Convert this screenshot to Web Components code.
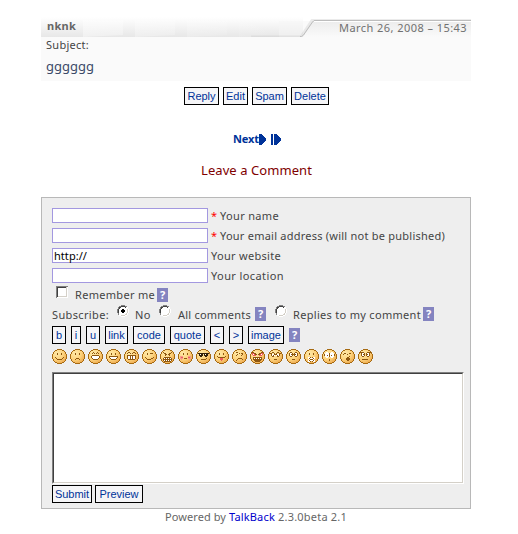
<!DOCTYPE html>
<html lang="en">
<head>
<meta charset="utf-8">
<title>Leave a Comment</title>
<style>
body{margin:0;background:#fff;font:11px/16px "Noto Sans","Open Sans",sans-serif;color:#444}
</style>
</head>
<body>
<tb-page></tb-page>
<script>
const define=(name,html,setup)=>{
  const t=document.createElement('template');t.innerHTML=html;
  customElements.define(name,class extends HTMLElement{
    constructor(){super();this.attachShadow({mode:'open'}).append(t.content.cloneNode(true));}
    connectedCallback(){if(setup)setup(this,this.shadowRoot);}
  });
};

/* Text run whose tracking is adjusted to a set width */
define('tb-text','<style>:host{display:block;flex:none;white-space:pre}span{display:inline-block}</style><span><slot></slot></span>',(el,root)=>{
  const w=+el.getAttribute('w'),s=root.querySelector('span');
  el.style.width=w+'px';
  s.style.letterSpacing=((w-s.getBoundingClientRect().width)/el.textContent.length)+'px';
});
define('tb-button',`<style>:host{display:block;flex:none;height:18px}
button{box-sizing:border-box;display:flex;align-items:center;justify-content:center;width:100%;height:18px;margin:0;padding:0;border:1px solid #000;border-radius:0;background:#f5f5f7;color:#039;font:11px/16px "Liberation Sans",Arial,sans-serif;white-space:pre}</style><button><slot></slot></button>`,
(el)=>{el.style.width=el.getAttribute('w')+'px';});
define('tb-help',`<style>:host{display:block;flex:none;width:11px;height:14px;background:#8484c0;color:#fff;font:bold 11px/14px "Noto Sans",sans-serif;text-align:center}</style>?`);
define('tb-input',`<style>:host{display:block;flex:none;width:156px;height:15px}
div{box-sizing:border-box;height:15px;border:1px solid #a398e0;background:#fff;color:#000;padding-left:1px;font:11px/14px "Noto Sans",sans-serif}</style><div><slot></slot></div>`);
define('tb-row',`<style>:host{display:flex;align-items:flex-start}</style><slot></slot>`);
define('tb-check',`<style>:host{display:block;flex:none;width:12px;height:12px}svg{display:block}</style>
<svg width="12" height="12" shape-rendering="crispEdges"><path fill="#fff" d="M0 0h12v12H0z"/><path fill="#808080" d="M0 0h12v1H1v11H0z"/><path fill="#404040" d="M1 1h10v1H2v9H1z"/><path fill="#d4d0c8" d="M11 1v10H2v-1h8V1z"/></svg>`);
define('tb-radio',`<style>:host{display:block;flex:none;width:12px;height:12px}svg{display:block}.d{display:none}:host([checked]) .d{display:block}</style>
<svg width="12" height="12" shape-rendering="crispEdges"><path fill="#fff" d="M4 0h4v1h2v1h1v2h1v4h-1v2h-1v1H8v1H4v-1H2v-1H1V8H0V4h1V2h1V1h2z"/><path fill="#808080" d="M4 0h4v1h2v1H8V1H4v1H2v2H1v4h1v2H1V8H0V4h1V2h1V1h2z"/><path fill="#404040" d="M4 1h4v1h1v1H8V2H4v1H3v1H2v4H1V4h1V2h2z"/><path fill="#d4d0c8" d="M10 4h1v4h-1v2H8v1H4v-1h4V9h1V8h1z"/><path class="d" fill="#000" d="M5 4h2v1h1v2H7v1H5V7H4V5h1z"/></svg>`);

/* Feature maps: 11 columns x 10 rows inside a 15px face */
const faces={
smile:'...........|...b...b...|...b...b...|...........|...........|.b.......b.|..b.....b..|...bbbbb...',
sad:'...........|...b...b...|...b...b...|...........|...........|...........|....bbb....|...b...b...',
grin:'...b...b...|..b.b.b.b..|...........|..bbbbbbb..|.bwwwwwwwb.|.bwwwwwwwb.|..bwwwwwb..|...bbbbb...',
laugh:'...........|...b...b...|...b...b...|...........|.bbbbbbbbb.|.bwwwwwwwb.|..bwwwwwb..|...bbbbb...',
teeth:'..bb...bb..|.b..b.b..b.|...........|.bbbbbbbbb.|.bwwbwbwwb.|.bwwbwbwwb.|.bwwbwbwwb.|..bbbbbbb..',
wink:'...........|...b..bbb..|...b.......|...........|...........|.b.......b.|..b....bb..|...bbbb....',
angry:'.b.......b.|..bb...bb..|...bb.bb...|...b...b...|...........|..bbbbbbb..|.bwbwbwbwb.|.bbbbbbbbb.|.bwbwbwbwb.|..bbbbbbb..',
blush:'...........|...b...b...|...b...b...|...........|ppp.....ppp|prr.....rrp|ppp.bbb.ppp|.p.......p.',
cool:'...........|kkkkkkkkkkk|.kwkk.kwkk.|.kkkk.kkkk.|..kk...kk..|...........|........b..|...bbbbb...',
tongue:'...........|...b...b...|...b...b...|...........|.b.......b.|..bbbbbbb..|....rrr....|....rrr....|.....r.....',
confused:'..bb.......|.....b.bb..|...b....b..|..b....b...|...........|...........|....bbbb...|...b....b..|..b........',
evil:'bb.......bb|rrbb...bbrr|rwrbb.bbrwr|.rrr...rrr.|...........|.bbbbbbbbb.|.bwbwbwbwb.|.bbbbbbbbb.|..bbbbbbb..|...bbbbb...',
specs:'..bb...bb..|bb..b.b..bb|.bwwbbbwwb.|.bwbw.wbwb.|..bb...bb..|...........|...........|....bbb....',
roll:'..bb...bb..|.bwwb.bwwb.|.bwbbbbbwb.|.bwwb.bwwb.|..bb...bb..|...........|...........|....bbb....',
zip:'...........|...b...b...|...b...b...|...........|...........|..wwb.bww..|..wbwwwbw..|...wbbbw...|..wbwwwbw..|..wwb.bww..',
eek:'..ww...ww..|.wwwwbwwww.|bwwwwbwwwwb|bwwbwbwbwwb|.wwwwbwwww.|..ww...ww..|...........|.....b.....|.....b.....',
yawn:'...........|..bb...bb..|.b...b.....|...........|.......b...|.....bb....|....bbbb...|....bbbb...|.....bb....',
eyes:'bbbb...bbbb|.bwwb.bwwb.|.bwbb.bbwb.|.bwwb.bwwb.|..bb...bb..|...........|...........|..bbbbbb...'
};
define('tb-smiley',`<style>:host{display:block;flex:none;width:15px;height:15px}svg{display:block}</style>
<svg width="15" height="15" shape-rendering="crispEdges"><defs><radialGradient id="g" cx=".35" cy=".3" r=".75"><stop offset="0" stop-color="#ffeaa9"/><stop offset=".55" stop-color="#fdd27c"/><stop offset="1" stop-color="#eba447"/></radialGradient></defs>
<path fill="url(#g)" d="M5 0h5v1h2v1h1v1h1v2h1v5h-1v2h-1v1h-1v1h-2v1H5v-1H3v-1H2v-1H1v-2H0V5h1V3h1V2h1V1h2z"/>
<path fill="#a66a12" d="M5 0h5v1H5zM3 1h2v1H3zM10 1h2v1h-2zM2 2h1v1H2zM12 2h1v1h-1zM1 3h1v2H1zM13 3h1v2h-1zM0 5h1v5H0zM14 5h1v5h-1zM1 10h1v2H1zM13 10h1v2h-1zM2 12h1v1H2zM12 12h1v1h-1zM3 13h2v1H3zM10 13h2v1h-2zM5 14h5v1H5z"/></svg>`,
(el,root)=>{
  const c={b:'#8e5710',w:'#fff',k:'#33200a',r:'#ec5a60',p:'#f59a8c'},svg=root.querySelector('svg'),d={};
  faces[el.getAttribute('face')].split('|').forEach((r,y)=>[...r].forEach((ch,x)=>{if(c[ch])d[ch]=(d[ch]||'')+`M${x+2} ${y+3}h1v1h-1z`;}));
  for(const k in d){const p=document.createElementNS('http://www.w3.org/2000/svg','path');p.setAttribute('d',d[k]);p.setAttribute('fill',c[k]);svg.append(p);}
});

define('tb-post',`<style>
:host{display:block;width:430px;height:64px;background:#fafafa;margin-left:41px}
header{display:grid;height:20px}
header>*{grid-area:1/1}
.head{padding:1px 4px 0 6px;justify-content:space-between}
.name{color:#666;font-weight:bold}.date{color:#707070;margin-top:2px}
.body{display:flex;flex-direction:column;padding:0 5px}
.msg{font-size:13px;line-height:18px;margin-top:4px;color:#3c4a68}
svg{display:block}</style>
<header><svg width="430" height="20"><defs>
<linearGradient id="a" x2="0" y2="1"><stop stop-color="#fff"/><stop offset="1" stop-color="#e7e7e7"/></linearGradient>
<linearGradient id="b" x2="0" y2="1"><stop stop-color="#ececec"/><stop offset="1" stop-color="#fafafa"/></linearGradient>
<linearGradient id="c"><stop stop-color="#fff" stop-opacity=".4"/><stop offset="1" stop-color="#fff" stop-opacity="0"/></linearGradient></defs>
<path fill="#fff" d="M0 0h430v20H0z"/><path fill="url(#a)" d="M0 0h262v20H0z"/>
<g fill="url(#c)"><path d="M42 3h40v15l-40 2zM94 3h40v15l-40 2zM146 3h40v15l-40 2zM198 3h40v15l-40 2z"/></g>
<path fill="#f6f6f6" d="M238 4h192v16H238z" opacity=".5"/>
<path fill="url(#b)" d="M260 20l12-16h158v16z"/>
<path fill="none" stroke="#ccc" stroke-width="3" d="M210 20H260L271 3.500H430" opacity=".4"/>
<path fill="none" stroke="#bdbdbd" d="M259 19.500h1.500l2-1.500 9-13 1.500-1.500H430"/>
<path fill="none" stroke="#fff" d="M273 4.500H430"/></svg>
<tb-row class="head"><tb-text class="name" w="29">nknk</tb-text><tb-text class="date" w="128">March 26, 2008 – 15:43</tb-text></tb-row></header>
<div class="body"><tb-text w="43">Subject:</tb-text><tb-text class="msg" w="48">gggggg</tb-text></div>`);

define('tb-form',`<style>
:host{box-sizing:border-box;display:flex;flex-direction:column;width:430px;height:312px;margin-left:41px;padding:10px 10px 0;border:1px solid #b8b8b8;background:#eee}
.f{height:20px}.f>tb-text{margin-left:3px}.f>.star{color:#f00;margin-left:3px}
.remember{height:19px;padding:0 0 0 4px}.sub{height:20px}
.bar{height:23px;gap:5px}.bar tb-help{margin-top:2px}
.smileys{gap:3px;height:23px}
.area{box-sizing:border-box;width:412px;height:112px;flex:none;background:#fff;border:1px solid;border-color:#808080 #fff #fff #808080}
.area div{box-sizing:border-box;height:110px;border:1px solid;border-color:#404040 #d4d0c8 #d4d0c8 #404040}
.end{margin-top:1px;gap:3px}</style>
<tb-row class="f"><tb-input></tb-input><tb-text class="star" w="6">*</tb-text><tb-text w="59" style="margin-left:3px">Your name</tb-text></tb-row>
<tb-row class="f"><tb-input></tb-input><tb-text class="star" w="6">*</tb-text><tb-text w="225" style="margin-left:3px">Your email address (will not be published)</tb-text></tb-row>
<tb-row class="f"><tb-input><tb-text w="33" style="line-height:14px;margin:0">http://</tb-text></tb-input><tb-text w="70">Your website</tb-text></tb-row>
<tb-row class="f"><tb-input></tb-input><tb-text w="73">Your location</tb-text></tb-row>
<tb-row class="remember"><tb-check style="margin-top:-2px"></tb-check><tb-text w="80" style="margin:-1px 0 0 7px">Remember me</tb-text><tb-help style="margin-left:2px"></tb-help></tb-row>
<tb-row class="sub"><tb-text w="57">Subscribe:</tb-text><tb-radio checked style="margin:-2px 0 0 8px"></tb-radio><tb-text w="16" style="margin:0 0 0 6px">No</tb-text><tb-radio style="margin:-2px 0 0 8px"></tb-radio><tb-text w="73" style="margin:0 0 0 7px">All comments</tb-text><tb-help style="margin-left:4px"></tb-help><tb-radio style="margin:-2px 0 0 9px"></tb-radio><tb-text w="128" style="margin:0 0 0 6px">Replies to my comment</tb-text><tb-help style="margin-left:2px"></tb-help></tb-row>
<tb-row class="bar" style="margin-top:-1px"><tb-button w="14">b</tb-button><tb-button w="10">i</tb-button><tb-button w="14">u</tb-button><tb-button w="23">link</tb-button><tb-button w="32">code</tb-button><tb-button w="35">quote</tb-button><tb-button w="14">&lt;</tb-button><tb-button w="14">&gt;</tb-button><tb-button w="36">image</tb-button><tb-help></tb-help></tb-row>
<tb-row class="smileys">${Object.keys(faces).map(f=>`<tb-smiley face="${f}"></tb-smiley>`).join('')}</tb-row>
<div class="area"><div></div></div>
<tb-row class="end"><tb-button w="40">Submit</tb-button><tb-button w="48">Preview</tb-button></tb-row>`);

define('tb-page',`<style>:host{display:block;box-sizing:border-box;width:518px;height:534px;padding-top:17px;overflow:hidden}
.actions{gap:4px;margin:6px 0 0 184px;height:18px}
.next{margin:26px 0 0 233px;height:16px;color:#039;font-weight:bold}
.next svg{margin-top:3px}
.title{margin:14px 0 0 201px;color:#800000;font-size:13px;line-height:18px}
.title+tb-form{margin-top:18px}
.foot{color:#666;margin-left:165px}</style>
<tb-post></tb-post>
<tb-row class="actions"><tb-button w="35">Reply</tb-button><tb-button w="25">Edit</tb-button><tb-button w="35">Spam</tb-button><tb-button w="38">Delete</tb-button></tb-row>
<tb-row class="next"><tb-text w="26">Next</tb-text><svg width="24" height="11" fill="#039" shape-rendering="crispEdges"><path d="M0 0h2l5 5v1l-5 5H0zM12 0h2v11h-2zM15 0h2l5 5v1l-5 5h-2z"/></svg></tb-row>
<tb-text class="title" w="111">Leave a Comment</tb-text>
<tb-form></tb-form>
<tb-row class="foot"><tb-text w="64">Powered by </tb-text><tb-text w="49" style="color:#00c">TalkBack </tb-text><tb-text w="69">2.3.0beta 2.1</tb-text></tb-row>`);
</script>
</body>
</html>
